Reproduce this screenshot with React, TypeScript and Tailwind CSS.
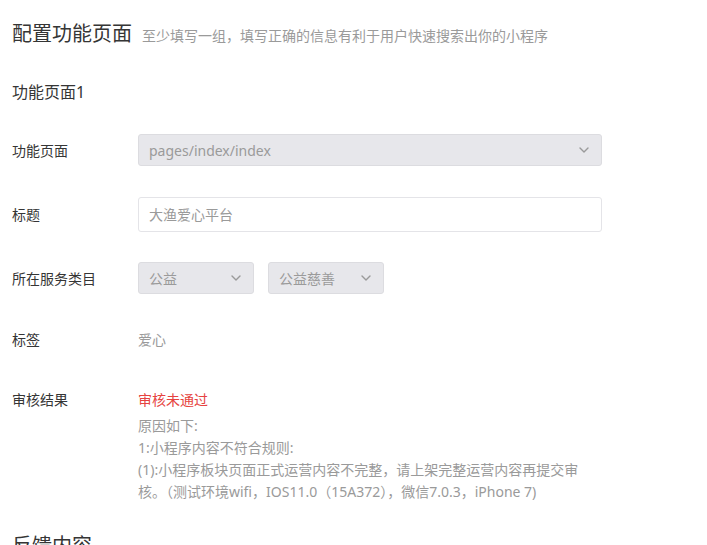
import React from "react";

const Chevron = () => (
  <svg width="10" height="6" viewBox="0 0 10 6" fill="none" className="shrink-0">
    <path d="M1 1l4 4 4-4" stroke="#9a9a9a" strokeWidth="1.4" strokeLinecap="round" strokeLinejoin="round" />
  </svg>
);

const Label = ({ children }: { children: React.ReactNode }) => (
  <div className="w-[126px] shrink-0 text-[14px] text-[#353535]">{children}</div>
);

const SelectBox = ({ value, className }: { value: string; className: string }) => (
  <div
    className={`flex h-[32px] items-center justify-between rounded-[3px] border border-[#dcdce0] bg-[#e7e7eb] pl-[10px] pr-[12px] text-[14px] text-[#9a9a9a] ${className}`}
  >
    <span>{value}</span>
    <Chevron />
  </div>
);

export default function App() {
  return (
    <div
      className="min-h-screen bg-white pl-[12px] text-[#353535]"
      style={{ fontFamily: '"Noto Sans", "Noto Sans CJK SC", sans-serif' }}
    >
      <div className="flex items-baseline pt-[20px]">
        <h1 className="text-[20px] leading-[28px] font-normal text-[#353535]">配置功能页面</h1>
        <span className="ml-[10px] text-[14px] text-[#9a9a9a]">至少填写一组，填写正确的信息有利于用户快速搜索出你的小程序</span>
      </div>

      <h2 className="mt-[32px] text-[16px] leading-[24px] font-normal">功能页面1</h2>

      <div className="mt-[30px] flex items-center">
        <Label>功能页面</Label>
        <SelectBox value="pages/index/index" className="w-[464px]" />
      </div>

      <div className="mt-[31px] flex items-center">
        <Label>标题</Label>
        <div className="flex h-[35px] w-[464px] items-center rounded-[3px] border border-[#e4e4e8] bg-white px-[10px] text-[14px] text-[#9a9a9a]">
          大渔爱心平台
        </div>
      </div>

      <div className="mt-[30px] flex items-center">
        <Label>所在服务类目</Label>
        <div className="flex gap-[14px]">
          <SelectBox value="公益" className="w-[116px]" />
          <SelectBox value="公益慈善" className="w-[116px]" />
        </div>
      </div>

      <div className="mt-[35px] flex items-center leading-[22px]">
        <Label>标签</Label>
        <span className="text-[14px] text-[#9a9a9a]">爱心</span>
      </div>

      <div className="mt-[38px] flex items-start leading-[22px]">
        <Label>审核结果</Label>
        <div className="w-[446px] text-[14px] text-[#9a9a9a]">
          <div className="text-[#e64340]">审核未通过</div>
          <div className="mt-[4px]">原因如下:</div>
          <div>1:小程序内容不符合规则:</div>
          <div>(1):小程序板块页面正式运营内容不完整，请上架完整运营内容再提交审核。（测试环境wifi，IOS11.0（15A372），微信7.0.3，iPhone 7)</div>
        </div>
      </div>

      <h2 className="mt-[29px] text-[20px] leading-[28px] font-normal">反馈内容</h2>
    </div>
  );
}
